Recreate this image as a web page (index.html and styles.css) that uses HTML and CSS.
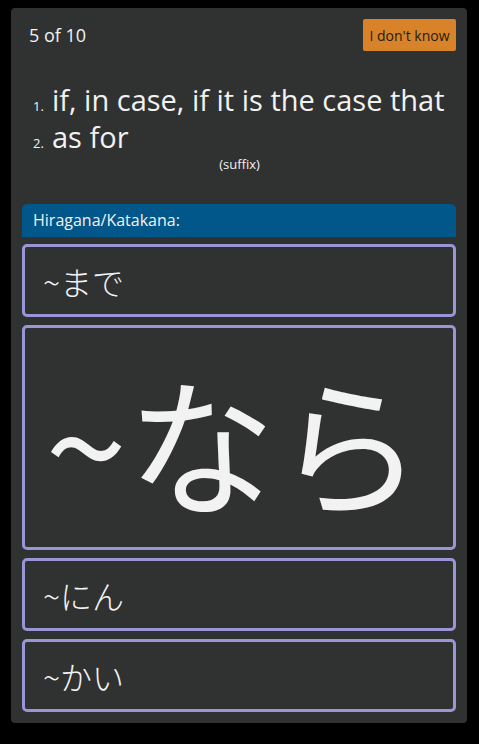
FILE: index.html
```html
<!DOCTYPE html>
<html lang="en">
<head>
<meta charset="utf-8">
<title>Quiz</title>
<link rel="stylesheet" href="styles.css">
</head>
<body>
<main class="card">
  <header class="top">
    <span class="counter">5 of 10</span>
    <button class="skip" type="button">I don't know</button>
  </header>
  <section class="prompt">
    <ol class="meanings">
      <li><span class="num">1.</span>if, in case, if it is the case that</li>
      <li><span class="num">2.</span>as for</li>
    </ol>
    <div class="pos">(suffix)</div>
  </section>
  <div class="label">Hiragana/Katakana:</div>
  <div class="choices">
    <div class="choice">~まで</div>
    <div class="choice choice-big">~なら</div>
    <div class="choice">~にん</div>
    <div class="choice">~かい</div>
  </div>
</main>
</body>
</html>
```
FILE: styles.css
```css
html, body {
  margin: 0;
  padding: 0;
  background: #000;
}
body {
  padding: 8px 12px 0 11px;
  font-family: "Open Sans", "Noto Sans CJK JP", sans-serif;
  color: #f2f2f2;
}
.card {
  background: #303131;
  border-radius: 4px;
  padding: 11px;
  display: flex;
  flex-direction: column;
}
.top {
  display: flex;
  justify-content: space-between;
  align-items: center;
  height: 32px;
}
.counter {
  font-size: 18px;
  padding-left: 7px;
  line-height: 24px;
}
.skip {
  background: #d8832a;
  color: #231d10;
  border: none;
  border-radius: 2px;
  font-family: "Open Sans", sans-serif;
  font-size: 14px;
  height: 32px;
  width: 93px;
  padding: 0;
}
.prompt {
  padding-top: 30px;
  height: 119px;
  box-sizing: border-box;
}
.meanings {
  margin: 0;
  padding-left: 11px;
  list-style: none;
  font-size: 29px;
  line-height: 37px;
}
.meanings li {
  white-space: nowrap;
}
.num {
  display: inline-block;
  font-size: 13px;
  line-height: 1;
  width: 19px;
}
.pos {
  text-align: center;
  font-size: 13px;
  line-height: 17px;
  margin-top: 1px;
  padding-left: 1px;
}
.label {
  margin-top: 34px;
  background: #01568a;
  border-radius: 5px 5px 0 0;
  height: 33px;
  line-height: 33px;
  font-size: 16px;
  padding-left: 11px;
}
.choices {
  display: flex;
  flex-direction: column;
  gap: 8px;
  margin-top: 7px;
}
.choice {
  border: 3px solid #9a95d6;
  border-radius: 5px;
  height: 67px;
  display: flex;
  align-items: center;
  padding-left: 18px;
  font-size: 32px;
  font-family: "Noto Sans CJK JP", sans-serif;
  font-weight: 300;
}
.choice-big {
  height: 215px;
  font-size: 148px;
  font-weight: 400;
  padding-left: 20px;
  padding-top: 4px;
}
```
